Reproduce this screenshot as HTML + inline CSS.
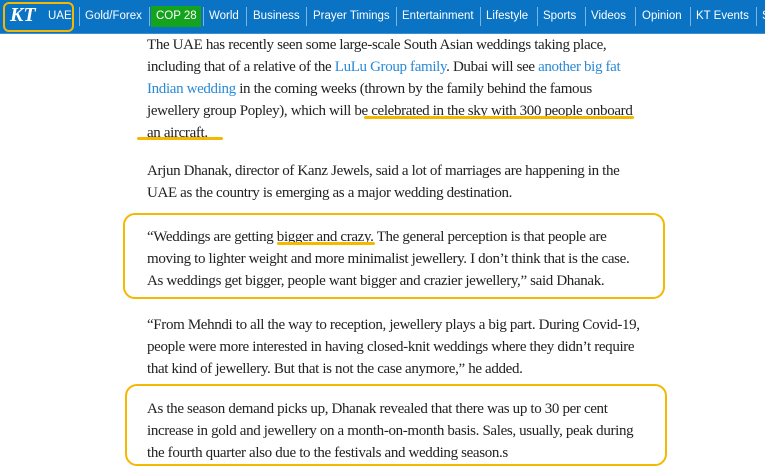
<!DOCTYPE html>
<html><head><style>
body{margin:0;width:765px;height:470px;overflow:hidden;background:#fff;position:relative;font-family:"Liberation Serif",serif}
.nav{position:absolute;left:0;top:0;width:765px;height:33px;background:#0a73c3;border-bottom:1px solid #3d8fd0}
.nav span{position:absolute;top:10px;font:11.5px "Liberation Sans",sans-serif;color:#fff;white-space:nowrap}
.sep{position:absolute;top:7px;width:1px;height:19px;background:#7fb4e0}
.logo{position:absolute;left:3px;top:2px;width:67px;height:26px;border:2px solid #f5b800;border-radius:6px}
.cop{position:absolute;left:151px;top:6px;width:50px;height:21px;background:#14a31c}
p{position:absolute;left:147px;margin:0;font-size:15px;line-height:22px;color:#222;white-space:nowrap;letter-spacing:-0.35px}
a{color:#2a8ad6;text-decoration:none}
.box{position:absolute;border:2.5px solid #f5b800;border-radius:12px}
.ul{position:absolute;height:3px;background:#f5b800;border-radius:2px}
</style></head><body>
<div class="nav">
<div class="cop"></div>
<div class="logo"></div>
<span style="left:10px;top:4px;font:bold 20px 'Liberation Serif',serif;font-style:italic">KT</span>
<span style="left:48px">UAE</span>
<div class="sep" style="left:79px"></div><span style="left:85px">Gold/Forex</span>
<div class="sep" style="left:149px"></div><span style="left:156px">COP 28</span>
<div class="sep" style="left:203px"></div><span style="left:209px">World</span>
<div class="sep" style="left:246px"></div><span style="left:253px">Business</span>
<div class="sep" style="left:306px"></div><span style="left:313px">Prayer Timings</span>
<div class="sep" style="left:396px"></div><span style="left:402px">Entertainment</span>
<div class="sep" style="left:480px"></div><span style="left:486px">Lifestyle</span>
<div class="sep" style="left:537px"></div><span style="left:543px">Sports</span>
<div class="sep" style="left:585px"></div><span style="left:591px">Videos</span>
<div class="sep" style="left:635px"></div><span style="left:642px">Opinion</span>
<div class="sep" style="left:690px"></div><span style="left:696px">KT Events</span>
<div class="sep" style="left:756px"></div><span style="left:762px">S</span>
</div>
<p style="top:34px">The UAE has recently seen some large-scale South Asian weddings taking place,<br>including that of a relative of the <a>LuLu Group family</a>. Dubai will see <a>another big fat</a><br><a>Indian wedding</a> in the coming weeks (thrown by the family behind the famous<br>jewellery group Popley), which will be celebrated in the sky with 300 people onboard<br>an aircraft.</p>
<div class="ul" style="left:364px;top:116px;width:270px"></div>
<div class="ul" style="left:137px;top:137px;width:86px"></div>
<p style="top:160px">Arjun Dhanak, director of Kanz Jewels, said a lot of marriages are happening in the<br>UAE as the country is emerging as a major wedding destination.</p>
<div class="box" style="left:123px;top:213px;width:538px;height:82px"></div>
<p style="top:226px">“Weddings are getting bigger and crazy. The general perception is that people are<br>moving to lighter weight and more minimalist jewellery. I don’t think that is the case.<br>As weddings get bigger, people want bigger and crazier jewellery,” said Dhanak.</p>
<div class="ul" style="left:277px;top:242px;width:98px"></div>
<p style="top:314px">“From Mehndi to all the way to reception, jewellery plays a big part. During Covid-19,<br>people were more interested in having closed-knit weddings where they didn’t require<br>that kind of jewellery. But that is not the case anymore,” he added.</p>
<div class="box" style="left:125px;top:384px;width:538px;height:78px"></div>
<p style="top:398px">As the season demand picks up, Dhanak revealed that there was up to 30 per cent<br>increase in gold and jewellery on a month-on-month basis. Sales, usually, peak during<br>the fourth quarter also due to the festivals and wedding season.s</p>
</body></html>
